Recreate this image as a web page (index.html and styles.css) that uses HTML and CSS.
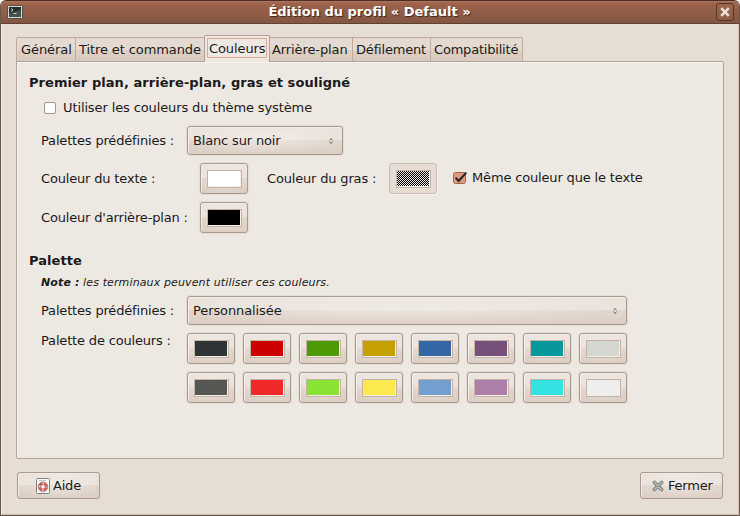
FILE: index.html
```html
<!DOCTYPE html>
<html lang="fr">
<head>
<meta charset="utf-8">
<title>Édition du profil « Default »</title>
<link rel="stylesheet" href="styles.css">
</head>
<body>
<div class="window">
  <header class="titlebar">
    <svg class="term-icon" width="16" height="14" viewBox="0 0 16 14"><rect x=".5" y=".5" width="15" height="13" rx="1" fill="#d3d7d2" stroke="#4f4f4b"/><rect x="2" y="2" width="12" height="10" fill="#29312f"/><path d="M2 8l12-3v7H2z" fill="#46524e"/><path d="M4 3.5l2 1.5-2 1.5M6.5 8.5h3" fill="none" stroke="#d8e0da" stroke-width=".9"/></svg>
    <h1 class="title">Édition du profil « Default »</h1>
    <button class="close" aria-label="Fermer"><svg width="10" height="10" viewBox="0 0 10 10"><path d="M1.2 1.2l7.6 7.6M8.8 1.2L1.2 8.8" stroke="#eadfd9" stroke-width="2.6"/></svg></button>
  </header>
  <main class="body">
    <nav class="tabs">
      <div class="tab t1">Général</div><div class="tab t2">Titre et commande</div><div class="tab active"><span>Couleurs</span></div><div class="tab t4">Arrière-plan</div><div class="tab t5">Défilement</div><div class="tab t6">Compatibilité</div>
    </nav>
    <section class="pane">
      <h2>Premier plan, arrière-plan, gras et souligné</h2>
      <label class="check-row"><i class="box"></i>Utiliser les couleurs du thème système</label>
      <div class="row preset"><span class="label">Palettes prédéfinies :</span><button class="btn combo short">Blanc sur noir<svg width="4" height="6" viewBox="0 0 4 6"><path d="M.5 2L2 .6 3.5 2M.5 4L2 5.4 3.5 4" fill="none" stroke="#51493f" stroke-width=".9"/></svg></button></div>
      <div class="row fg"><span class="label wide">Couleur du texte :</span><button class="btn color"><i class="swatch white"></i></button><span class="label bold-label">Couleur du gras :</span><button class="btn color disabled"><i class="swatch hatch"></i></button>
        <label class="same"><svg width="15" height="14" viewBox="0 0 15 14"><rect x=".5" y="1.5" width="12" height="11" rx="2" fill="#dc9a7f" stroke="#9c6650"/><path d="M2.6 6.7l3 3.3L13.3 1.6" fill="none" stroke="#222" stroke-width="2"/></svg>Même couleur que le texte</label></div>
      <div class="row bg"><span class="label wide">Couleur d'arrière-plan :</span><button class="btn color"><i class="swatch black"></i></button></div>
      <h2 class="palette-title">Palette</h2>
      <p class="note"><b>Note :</b> les terminaux peuvent utiliser ces couleurs.</p>
      <div class="row preset2"><span class="label">Palettes prédéfinies :</span><button class="btn combo long">Personnalisée<svg width="4" height="6" viewBox="0 0 4 6"><path d="M.5 2L2 .6 3.5 2M.5 4L2 5.4 3.5 4" fill="none" stroke="#51493f" stroke-width=".9"/></svg></button></div>
      <div class="row colors"><span class="label top">Palette de couleurs :</span>
        <div class="grid">
          <button class="btn color"><i class="swatch c0"></i></button><button class="btn color"><i class="swatch c1"></i></button><button class="btn color"><i class="swatch c2"></i></button><button class="btn color"><i class="swatch c3"></i></button><button class="btn color"><i class="swatch c4"></i></button><button class="btn color"><i class="swatch c5"></i></button><button class="btn color"><i class="swatch c6"></i></button><button class="btn color"><i class="swatch c7"></i></button>
          <button class="btn color"><i class="swatch c8"></i></button><button class="btn color"><i class="swatch c9"></i></button><button class="btn color"><i class="swatch c10"></i></button><button class="btn color"><i class="swatch c11"></i></button><button class="btn color"><i class="swatch c12"></i></button><button class="btn color"><i class="swatch c13"></i></button><button class="btn color"><i class="swatch c14"></i></button><button class="btn color"><i class="swatch c15"></i></button>
        </div>
      </div>
    </section>
    <footer class="actions">
      <button class="btn action help"><svg width="14" height="16" viewBox="0 0 14 16"><rect x=".5" y=".5" width="13" height="15" rx="1" fill="#f8f8f6" stroke="#7e827c"/><path d="M3 2.5h7" stroke="#c4c6c2"/><circle cx="7" cy="8.8" r="3.5" fill="none" stroke="#e2504c" stroke-width="2.4"/><circle cx="7" cy="8.8" r="3.5" fill="none" stroke="#e4e2df" stroke-width="2.4" stroke-dasharray="1.6 3.898" stroke-dashoffset=".8"/><circle cx="7" cy="8.8" r="4.8" fill="none" stroke="#8c6a66" stroke-width=".7"/><circle cx="7" cy="8.8" r="2.2" fill="none" stroke="#8c6a66" stroke-width=".6"/></svg>Aide</button>
      <button class="btn action quit"><svg width="12" height="12" viewBox="0 0 12 12"><path d="M2.4 2.4l7.2 7.2M9.6 2.4L2.4 9.6" stroke="#7c817b" stroke-width="3.6" stroke-linecap="round"/><path d="M2.4 2.4l7.2 7.2M9.6 2.4L2.4 9.6" stroke="#b4b8b1" stroke-width="1.6" stroke-linecap="round"/></svg>Fermer</button>
    </footer>
  </main>
</div>
</body>
</html>
```
FILE: styles.css
```css
* { box-sizing: border-box; }
body { margin: 0; background: #fff; font: 13px/16px "DejaVu Sans", sans-serif; color: #1a1a1a; }
button { font: inherit; color: inherit; padding: 0; margin: 0; letter-spacing: inherit; }
h1, h2, p { margin: 0; }
svg { flex: none; display: block; }
.window { width: 740px; height: 516px; border: 1px solid #6b564c; border-top-color: #482f29; border-radius: 6px 6px 0 0; background: #e6ddd4; overflow: hidden; white-space: nowrap; }
.titlebar { height: 23px; display: flex; align-items: center; padding: 0 5px 0 6px; background: linear-gradient(#a76c53, #9a6149 20%, #835743); border-bottom: 1px solid #61402f; box-shadow: inset 0 1px #b3705a; }
.title { flex: 1; text-align: center; font-size: 13px; font-weight: bold; color: #fff; text-shadow: 1px 1px 1px #3e241b; }
.close { width: 18px; height: 18px; display: flex; align-items: center; justify-content: center; border: 1px solid #50362b; border-radius: 3px; background: linear-gradient(#a0654d, #8c5b47); }
.body { height: 491px; padding: 12px 15px 0; border: solid #f0eae4; border-width: 0 0 0 1px; border-right: 1px solid #d2c5bb; border-bottom: 1px solid #c9bbb0; letter-spacing: -.1px; }
.tabs { display: flex; align-items: flex-end; height: 25px; margin-left: -1px; }
.tab { height: 24px; border: 1px solid #c1ab9f; border-bottom: 0; border-left-width: 0; padding: 4px 0 0 4px; background: linear-gradient(#e5dad1 0 50%, #ddcfc5 55%, #d9cabf); }
.t1 { width: 60px; border-left-width: 1px; border-top-left-radius: 2px; letter-spacing: -.08px; }
.t2 { width: 128px; padding-left: 3px; border-right: 0; }
.active { width: 66px; height: 27px; margin-bottom: -1px; padding: 2px 1px; border: 1px solid #b19f91; border-bottom: 0; border-radius: 2px 2px 0 0; background: #ede8e2; z-index: 1; }
.active span { display: block; width: 60px; height: 20px; margin-left: 1px; border: 1px solid #dca690; border-radius: 1px; padding: 2px 0 0 1px; }
.t4 { width: 83px; padding-left: 2px; }
.t5 { width: 78px; padding-left: 3px; letter-spacing: -.18px; }
.t6 { width: 92px; padding-left: 3px; border-top-right-radius: 2px; letter-spacing: -.2px; }
.pane { width: 708px; height: 398px; margin-left: -1px; border: 1px solid #b5a094; border-radius: 0 2px 2px 2px; background: #ede8e2; padding: 13px 12px; box-shadow: inset 1px 1px #f7f4f1; }
h2 { font-size: 13px; font-weight: bold; line-height: 16px; letter-spacing: .05px; }
.check-row { display: flex; align-items: center; margin: 9px 0 0 15px; height: 16px; letter-spacing: -.115px; }
.box { width: 12px; height: 12px; margin-right: 7px; border: 1px solid #a99382; border-radius: 2px; background: #fff; }
.row { display: flex; align-items: center; margin-left: 12px; }
.label { width: 146px; flex: none; letter-spacing: -.17px; }
.wide { width: 159px; }
.preset { margin-top: 10px; }
.fg { margin-top: 8px; }
.bg { margin-top: 8px; }
.btn { flex: none; border: 1px solid #a99a8b; border-radius: 3px; background: radial-gradient(ellipse 60% 60% at 50% 45%, #f5f2ee99, #f5f2ee00), linear-gradient(#ebe2db, #e9e1da 49%, #dfd3ca 50%, #dccec4); box-shadow: inset 1px 1px #f3ede9, 0 0 0 1px #e5ddd5; }
.combo { height: 29px; display: flex; align-items: center; justify-content: space-between; padding: 0 9px 0 5px; }
.short { width: 156px; letter-spacing: -.16px; }
.long { width: 440px; }
.color { width: 48px; height: 31px; display: flex; align-items: center; padding-left: 6px; }
.swatch { width: 35px; height: 18px; border: 1px solid #c5b3a5; box-shadow: inset -1px -1px #f3eee8; }
.disabled { border-color: #c8baac; background: #e6dcd4; box-shadow: 1px 1px #f6f2ee; }
.hatch { background: conic-gradient(#000 25%, #eee7e0 0 50%, #000 0 75%, #eee7e0 0) 0 0/2px 2px; }
.bold-label { width: 122px; margin-left: 19px; }
.same { display: flex; align-items: center; margin: -1px 0 0 16px; gap: 4px; letter-spacing: -.16px; }
.palette-title { margin-top: 20px; }
.note { margin: 7px 0 0 12px; font-size: 11px; line-height: 14px; font-style: italic; letter-spacing: .125px; }
.preset2 { margin-top: 6px; }
.colors { align-items: flex-start; margin-top: 8px; }
.grid { display: grid; grid-template-columns: repeat(8, 48px); gap: 8px; }
.actions { display: flex; justify-content: space-between; margin-top: 13px; }
.action { height: 27px; width: 83px; display: flex; align-items: center; gap: 3px; letter-spacing: -.2px; }
.help { padding-left: 18px; }
.quit { padding-left: 11px; gap: 4px; }
.white { background: #fff; } .black { background: #000; }
.c0 { background: #2e3436; } .c1 { background: #cc0000; } .c2 { background: #4e9a06; } .c3 { background: #c4a000; }
.c4 { background: #3465a4; } .c5 { background: #75507b; } .c6 { background: #06989a; } .c7 { background: #d3d7cf; }
.c8 { background: #555753; } .c9 { background: #ef2929; } .c10 { background: #8ae234; } .c11 { background: #fce94f; }
.c12 { background: #729fcf; } .c13 { background: #ad7fa8; } .c14 { background: #34e2e2; } .c15 { background: #eeeeec; }
```
